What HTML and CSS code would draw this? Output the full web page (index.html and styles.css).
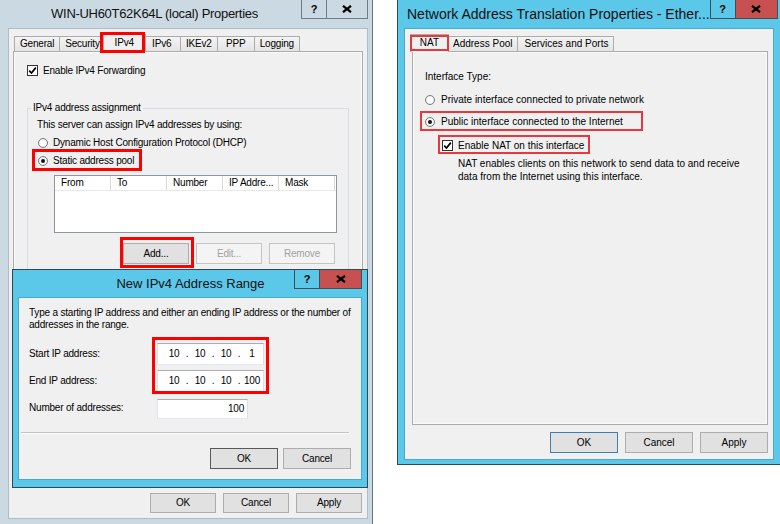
FILE: index.html
```html
<!DOCTYPE html>
<html lang="en">
<head>
<meta charset="utf-8">
<title>Properties</title>
<link rel="stylesheet" href="styles.css">
</head>
<body>
<div class="desk">

  <section class="win win-left">
    <header class="titlebar tb-left">
      <div class="title title-left">WIN-UH60T62K64L (local) Properties</div>
      <div class="caps">
        <span class="cap cap-help">?</span>
        <span class="cap cap-close"><svg class="xicon" width="10" height="8" viewBox="0 0 10 8"><path d="M1 0.8 L9 7.2 M9 0.8 L1 7.2"/></svg></span>
      </div>
    </header>
    <div class="client client-left">
      <nav class="tabs">
        <span class="tab">General</span>
        <span class="tab">Security</span>
        <span class="tab sel">IPv4</span>
        <span class="tab">IPv6</span>
        <span class="tab">IKEv2</span>
        <span class="tab">PPP</span>
        <span class="tab">Logging</span>
      </nav>
      <div class="panel panel-left">
        <div class="chkrow"><span class="chk"><svg width="9" height="9" viewBox="0 0 9 9"><path d="M1.2 4.6 L3.5 7 L7.8 1.6"/></svg></span><span>Enable IPv4 Forwarding</span></div>
        <fieldset class="group">
          <legend class="group-label">IPv4 address assignment</legend>
          <div class="line">This server can assign IPv4 addresses by using:</div>
          <div class="radrow"><span class="rad"></span><span>Dynamic Host Configuration Protocol (DHCP)</span></div>
          <div class="radrow"><span class="rad on"></span><span>Static address pool</span></div>
          <div class="listview">
            <div class="lvhead">
              <span class="lvcol">From</span>
              <span class="lvcol">To</span>
              <span class="lvcol">Number</span>
              <span class="lvcol">IP Addre...</span>
              <span class="lvcol">Mask</span>
            </div>
          </div>
          <div class="btnrow btnrow-pool">
            <span class="btn">Add...</span>
            <span class="btn dis">Edit...</span>
            <span class="btn dis">Remove</span>
          </div>
        </fieldset>
      </div>
      <div class="btnrow btnrow-main">
        <span class="btn">OK</span>
        <span class="btn">Cancel</span>
        <span class="btn">Apply</span>
      </div>
    </div>
  </section>

  <section class="win win-child">
    <header class="titlebar tb-child">
      <div class="title title-child">New IPv4 Address Range</div>
      <div class="caps">
        <span class="cap cap-help">?</span>
        <span class="cap cap-close"><svg class="xicon" width="10" height="8" viewBox="0 0 10 8"><path d="M1 0.8 L9 7.2 M9 0.8 L1 7.2"/></svg></span>
      </div>
    </header>
    <div class="client client-child">
      <p class="desc">Type a starting IP address and either an ending IP address or the number of<br>addresses in the range.</p>
      <div class="form">
        <span>Start IP address:</span>
        <div class="ipbox"><span class="oct">10</span><span class="dot">.</span><span class="oct">10</span><span class="dot">.</span><span class="oct">10</span><span class="dot">.</span><span class="oct">1</span></div>
        <span>End IP address:</span>
        <div class="ipbox"><span class="oct">10</span><span class="dot">.</span><span class="oct">10</span><span class="dot">.</span><span class="oct">10</span><span class="dot">.</span><span class="oct">100</span></div>
        <span>Number of addresses:</span>
        <div class="numbox">100</div>
      </div>
      <div class="sep"></div>
      <div class="btnrow btnrow-child">
        <span class="btn focus">OK</span>
        <span class="btn">Cancel</span>
      </div>
    </div>
  </section>

  <section class="win win-right">
    <header class="titlebar tb-right">
      <div class="title title-right">Network Address Translation Properties - Ether...</div>
      <div class="caps">
        <span class="cap cap-help">?</span>
        <span class="cap cap-close"><svg class="xicon" width="10" height="8" viewBox="0 0 10 8"><path d="M1 0.8 L9 7.2 M9 0.8 L1 7.2"/></svg></span>
      </div>
    </header>
    <div class="client client-right">
      <nav class="tabs">
        <span class="tab sel">NAT</span>
        <span class="tab">Address Pool</span>
        <span class="tab">Services and Ports</span>
      </nav>
      <div class="panel panel-right">
        <div class="line">Interface Type:</div>
        <div class="radrow rr-first"><span class="rad"></span><span>Private interface connected to private network</span></div>
        <div class="radrow rr-second"><span class="rad on"></span><span>Public interface connected to the Internet</span></div>
        <div class="chkrow chk-nat"><span class="chk"><svg width="9" height="9" viewBox="0 0 9 9"><path d="M1.2 4.6 L3.5 7 L7.8 1.6"/></svg></span><span>Enable NAT on this interface</span></div>
        <p class="nat-desc">NAT enables clients on this network to send data to and receive<br>data from the Internet using this interface.</p>
      </div>
      <div class="btnrow btnrow-right">
        <span class="btn def">OK</span>
        <span class="btn">Cancel</span>
        <span class="btn">Apply</span>
      </div>
    </div>
  </section>

  <div class="mark mark-ipv4"></div>
  <div class="mark mark-static"></div>
  <div class="mark mark-add"></div>
  <div class="mark mark-ip"></div>
  <div class="mark mark-thin mark-nat"></div>
  <div class="mark mark-thin mark-public"></div>
  <div class="mark mark-thin mark-enable"></div>
</div>
</body>
</html>
```

FILE: styles.css
```css
* { box-sizing: border-box; }
html, body { margin: 0; padding: 0; }
body {
  width: 780px; height: 524px; overflow: hidden; background: #fff;
  font-family: "Liberation Sans", Arial, sans-serif;
  font-size: 10px; line-height: 12px; color: #000;
}
.desk { position: relative; width: 780px; height: 524px; overflow: hidden; }

/* windows */
.win { position: absolute; display: flex; flex-direction: column; }
.win-left {
  left: 0; top: 0; width: 373px; height: 524px;
  padding: 0 4px 5px 8px; background: #cbdae2;
  border-right: 1px solid #68767e; letter-spacing: -0.2px;
}
.win-child {
  left: 12px; top: 269px; width: 356px; height: 219px;
  padding: 0 5px 7px; background: #5bc7e9;
  border: 1px solid #2e4a56; letter-spacing: -0.2px; z-index: 2;
}
.win-right {
  left: 397px; top: 0; width: 384px; height: 465px;
  padding: 0 6px 4px; background: #5bc7e9;
  border: 1px solid #2e4a56; border-top: 0;
}

/* title bars */
.titlebar { display: flex; align-items: flex-start; flex: none; }
.tb-left, .tb-right { height: 28px; }
.tb-child { height: 27px; }
.title {
  flex: 1; height: 100%; display: flex; align-items: center;
  white-space: nowrap; font-size: 13px; color: #111;
}
.title-left { justify-content: center; letter-spacing: -0.3px; }
.title-child { justify-content: center; padding-left: 69px; letter-spacing: 0; }
.title-right { padding-left: 3px; font-size: 14px; }

.caps { display: flex; flex: none; }
.cap {
  height: 19px; display: flex; align-items: center; justify-content: center;
  border: 1px solid #3f4f58; border-top: 0;
}
.cap-help { width: 26px; font-weight: bold; font-size: 11px; letter-spacing: 0; }
.cap-close { width: 43px; margin-left: -1px; }
.win-left .cap { background: #cbdae2; border-color: #6d7c85; }
.win-left .cap-close { width: 42px; }
.win-child .cap-help, .win-right .cap-help { background: #5bc7e9; }
.win-child .cap-close, .win-right .cap-close { background: #c75050; }
.xicon path { stroke: #000; stroke-width: 2.2; fill: none; }

/* client */
.client {
  flex: 1; background: #f0f0f0; border: 1px solid #aebdc5;
  display: flex; flex-direction: column;
}
.client-left { padding: 5px 4px 0; }
.client-right { padding: 5px 5px 0 7px; border-color: #48a9cb; }
.client-child { padding: 9px 10px 10px; border-color: #48a9cb; }

/* tabs */
.tabs { display: flex; align-items: flex-end; height: 17px; flex: none; padding-left: 1px; }
.client-right .tabs { padding-left: 0; }
.tab {
  height: 15px; min-width: 38px; padding: 0 5px;
  border: 1px solid #acacac; border-bottom: 0; margin-right: -1px;
  background: linear-gradient(#f4f4f4, #e4e4e4);
  text-align: center; line-height: 14px; white-space: nowrap;
}
.tab.sel {
  height: 18px; min-width: 43px; margin: 0 -3px -1px -2px; padding: 0 7px;
  background: #f0f0f0; position: relative; z-index: 1; line-height: 15px;
}
.client-right .tab { padding: 0 5px 0 6px; }
.client-right .tab.sel { min-width: 39px; padding: 0 8px; }

/* panel */
.panel {
  flex: none; border: 1px solid #acacac; background: #f0f0f0;
  box-shadow: inset 0 0 0 1px #fafafa;
}
.panel-left { height: 433px; padding: 12px 13px 0; }
.panel-right { height: 374px; padding: 19px 12px 0; }

/* controls */
.line { height: 12px; white-space: nowrap; }
.chkrow, .radrow { display: flex; align-items: center; height: 13px; white-space: nowrap; }
.chk {
  width: 11px; height: 11px; border: 1px solid #333; background: #fff;
  margin-right: 5px; display: flex; align-items: center; justify-content: center; flex: none;
}
.chk path { fill: none; stroke: #000; stroke-width: 1.7; }
.rad {
  width: 10px; height: 10px; border-radius: 50%; border: 1px solid #7a7a7a;
  background: radial-gradient(circle, #ffffff 30%, #e6e6e6 100%);
  margin-right: 5px; display: flex; align-items: center; justify-content: center; flex: none;
}
.rad.on::after { content: ""; width: 4px; height: 4px; border-radius: 50%; background: #111; }

/* group box */
.group {
  margin: 25px 0 0; padding: 5px 10px 12px 9px;
  border: 1px solid #d5dde2; min-width: 0;
}
.group-label { padding: 0 2px; margin-left: -6px; line-height: 12px; }
.group .radrow { margin-top: 5px; margin-left: 1px; }

/* list view */
.listview {
  margin: 8px 0 0 17px; width: 283px; height: 58px;
  border: 1px solid #8e979e; background: #fff;
}
.lvhead { display: flex; height: 15px; border-bottom: 1px solid #e8e8e8; }
.lvcol {
  width: 56px; border-right: 1px solid #dadada; padding-left: 6px;
  line-height: 14px; white-space: nowrap;
}

/* buttons */
.btnrow { display: flex; justify-content: flex-end; gap: 7px; flex: none; }
.btn {
  width: 66px; height: 21px; border: 1px solid #adadad; background: #e1e1e1;
  display: flex; align-items: center; justify-content: center; white-space: nowrap;
}
.btn.dis { background: #f4f4f4; border-color: #c4c4c4; color: #a0a0a0; }
.btn.def { border-color: #3c7fb1; }
.btn.focus { border-color: #5a5a5a; }
.btnrow-pool { margin: 10px 0 0 17px; width: 281px; }
.btnrow-main { margin: 9px 1px 0 0; }
.btnrow-main .btn { height: 20px; }
.btnrow-child { margin-top: 14px; gap: 5px; }
.btnrow-child .btn { width: 68px; }
.btnrow-right { margin-top: 7px; }
.btnrow-right .btn { width: 68px; height: 21px; }

/* child dialog form */
.desc { margin: 0; white-space: nowrap; line-height: 12px; }
.form {
  display: grid; grid-template-columns: 128px auto; row-gap: 5px;
  margin-top: 12px; align-items: center; justify-items: start;
}
.ipbox, .numbox {
  background: #fff; border: 1px solid #abadb3;
  border-color: #abadb3 #dbdfe6 #e3e9ef #e2e3ea;
}
.ipbox { display: flex; align-items: center; width: 107px; height: 22px; padding-left: 6px; }
.oct { width: 20px; text-align: center; }
.dot { width: 6px; text-align: center; }
.numbox { width: 91px; height: 20px; margin-top: 2px; padding-right: 3px; text-align: right; line-height: 17px; }
.sep { margin: 13px 2px 0 -8px; border-top: 1px solid #c4c4c4; border-bottom: 1px solid #fafafa; }

/* NAT page */
.rr-first { margin-top: 10px; }
.rr-second { margin-top: 9px; }
.panel-right .rad { margin-right: 6px; }
.chk-nat { margin: 11px 0 0 17px; }
.nat-desc { margin: 5px 0 0 33px; line-height: 13px; white-space: nowrap; }

/* red annotation boxes */
.mark { position: absolute; border: 3px solid #f00; z-index: 5; }
.mark-ipv4 { left: 100px; top: 32px; width: 45px; height: 21px; }
.mark-static { left: 32px; top: 149px; width: 110px; height: 22px; }
.mark-add { left: 120px; top: 237px; width: 74px; height: 31px; }
.mark-ip { left: 152px; top: 337px; width: 117px; height: 57px; }
.mark-thin { border-width: 2px; border-color: #e8383d; }
.mark-nat { left: 410px; top: 35px; width: 39px; height: 16px; }
.mark-public { left: 420px; top: 111px; width: 223px; height: 20px; }
.mark-enable { left: 438px; top: 135px; width: 152px; height: 19px; }
```
